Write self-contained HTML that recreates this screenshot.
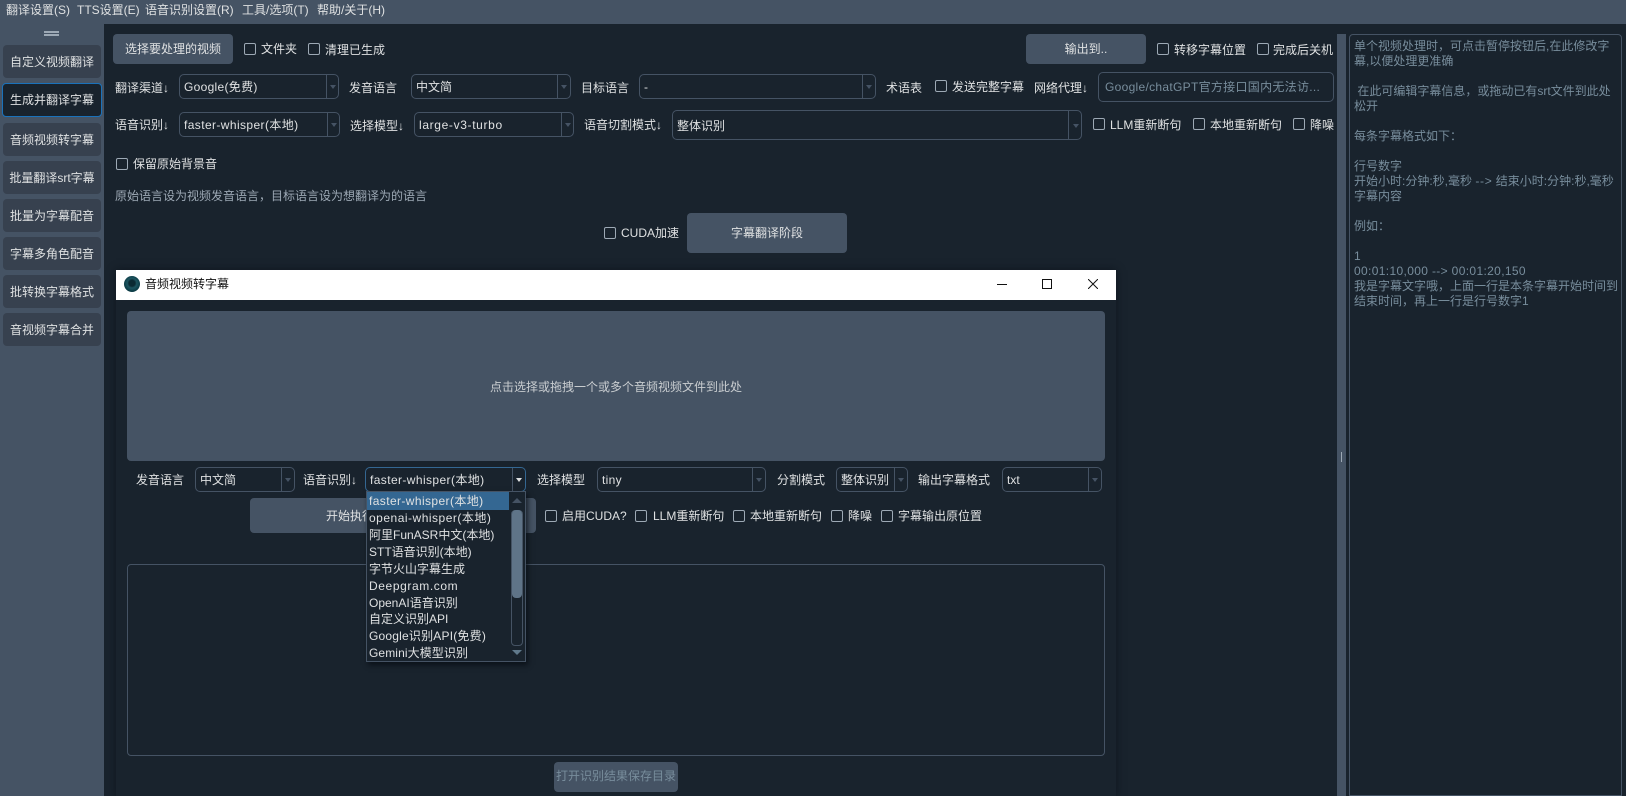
<!DOCTYPE html>
<html lang="zh"><head><meta charset="utf-8"><title>音频视频转字幕</title>
<style>
html,body{margin:0;padding:0;width:1626px;height:796px;overflow:hidden;background:#19232D}
body{position:relative;font:12px/16px "Liberation Sans","Noto Sans CJK SC",sans-serif;color:#DFE1E2}
div,span,i{position:absolute;box-sizing:border-box;white-space:nowrap}
.t{line-height:16px;height:16px;font-weight:400}
.b{background:#455364;border-radius:4px;text-align:center}
.c{width:12px;height:12px;border:1px solid #9DA9B5;border-radius:2px}
.s{border:1px solid #455364;border-radius:5px;height:25px;background:#19232D}
.s b{position:absolute;font-weight:400;left:4px;top:4px;line-height:16px}
.s u{position:absolute;top:0;bottom:0;width:1px;background:#455364}
.s s{position:absolute;top:10px;width:0;height:0;border-left:3px solid transparent;border-right:3px solid transparent;border-top:4px solid #455364}
.n{left:3px;width:98px;height:33px;background:#37414F;border-radius:4px;text-align:center;line-height:34px;color:#DFE1E2}
.m{top:2px}
.i{left:2px;height:17px;line-height:17px;color:#DFE1E2}
em{font-style:normal}
</style></head><body>
<!-- menu -->
<div style="left:0;top:0;width:1626px;height:24px;background:#455364"></div>
<span class="t m" style="left:6px">翻译设置(S)</span>
<span class="t m" style="left:77px">TTS设置(E)</span>
<span class="t m" style="left:145px">语音识别设置(R)</span>
<span class="t m" style="left:242px">工具/选项(T)</span>
<span class="t m" style="left:317px">帮助/关于(H)</span>
<!-- sidebar -->
<div style="left:0;top:24px;width:104px;height:772px;background:#455364"></div>
<div style="left:44px;top:31px;width:15px;height:2px;background:#9DA9B5"></div>
<div style="left:44px;top:34px;width:15px;height:2px;background:#9DA9B5"></div>
<div class="n" style="top:45px">自定义视频翻译</div>
<div class="n" style="top:83px;left:2px;width:100px;height:34px;line-height:33px;background:#19232D;border:1px solid #1A72BB">生成并翻译字幕</div>
<div class="n" style="top:123px">音频视频转字幕</div>
<div class="n" style="top:161px">批量翻译srt字幕</div>
<div class="n" style="top:199px">批量为字幕配音</div>
<div class="n" style="top:237px">字幕多角色配音</div>
<div class="n" style="top:275px">批转换字幕格式</div>
<div class="n" style="top:313px">音视频字幕合并</div>
<!-- top row -->
<div class="b" style="left:113px;top:34px;width:120px;height:30px;line-height:30px">选择要处理的视频</div>
<div class="c" style="left:244px;top:43px"></div><span class="t" style="left:261px;top:41px">文件夹</span>
<div class="c" style="left:308px;top:43px"></div><span class="t" style="left:325px;top:42px">清理已生成</span>
<div class="b" style="left:1026px;top:34px;width:120px;height:30px;line-height:30px">输出到..</div>
<div class="c" style="left:1157px;top:43px"></div><span class="t" style="left:1174px;top:42px">转移字幕位置</span>
<div class="c" style="left:1257px;top:43px"></div><span class="t" style="left:1273px;top:42px">完成后关机</span>
<!-- row 2 -->
<span class="t" style="left:115px;top:80px">翻译渠道↓</span>
<div class="s" style="left:179px;top:74px;width:160px"><b style="letter-spacing:.3px">Google(免费)</b><u style="left:146px"></u><s style="left:150px"></s></div>
<span class="t" style="left:349px;top:80px">发音语言</span>
<div class="s" style="left:411px;top:74px;width:160px"><b>中文简</b><u style="left:145px"></u><s style="left:149px"></s></div>
<span class="t" style="left:581px;top:80px">目标语言</span>
<div class="s" style="left:639px;top:74px;width:237px"><b>-</b><u style="left:222px"></u><s style="left:226px"></s></div>
<span class="t" style="left:886px;top:80px">术语表</span>
<div class="c" style="left:935px;top:80px"></div><span class="t" style="left:952px;top:79px">发送完整字幕</span>
<span class="t" style="left:1034px;top:80px">网络代理↓</span>
<div style="left:1098px;top:72px;width:236px;height:30px;border:1px solid #455364;border-radius:5px;color:#788D9C;padding:6px 0 0 6px;letter-spacing:.3px;overflow:hidden">Google/chatGPT官方接口国内无法访...</div>
<!-- row 3 -->
<span class="t" style="left:115px;top:117px">语音识别↓</span>
<div class="s" style="left:179px;top:112px;width:161px"><b style="letter-spacing:.4px">faster-whisper(本地)</b><u style="left:147px"></u><s style="left:151px"></s></div>
<span class="t" style="left:350px;top:118px">选择模型↓</span>
<div class="s" style="left:414px;top:112px;width:160px"><b style="letter-spacing:.65px">large-v3-turbo</b><u style="left:146px"></u><s style="left:150px"></s></div>
<span class="t" style="left:584px;top:117px">语音切割模式↓</span>
<div class="s" style="left:672px;top:110px;width:410px;height:30px"><b style="top:7px">整体识别</b><u style="left:395px"></u><s style="left:400px;top:13px"></s></div>
<div class="c" style="left:1093px;top:118px"></div><span class="t" style="left:1110px;top:117px">LLM重新断句</span>
<div class="c" style="left:1193px;top:118px"></div><span class="t" style="left:1210px;top:117px">本地重新断句</span>
<div class="c" style="left:1293px;top:118px"></div><span class="t" style="left:1310px;top:117px">降噪</span>
<div class="c" style="left:116px;top:158px"></div><span class="t" style="left:133px;top:156px">保留原始背景音</span>
<span class="t" style="left:115px;top:188px;color:#9DA9B5">原始语言设为视频发音语言，目标语言设为想翻译为的语言</span>
<div class="c" style="left:604px;top:227px"></div><span class="t" style="left:621px;top:225px">CUDA加速</span>
<div class="b" style="left:687px;top:213px;width:160px;height:40px;line-height:40px">字幕翻译阶段</div>
<!-- splitter and right pane -->
<div style="left:1337px;top:34px;width:9px;height:762px;background:#455364"></div>
<div style="left:1341px;top:452px;width:1px;height:10px;background:#9DA9B5"></div>
<div style="left:1349px;top:34px;width:273px;height:762px;border:1px solid #455364;border-radius:4px 4px 0 0"></div>
<div style="left:1354px;top:39px;width:266px;line-height:15px;color:#788D9C;white-space:pre">单个视频处理时，可点击暂停按钮后,在此修改字
幕,以便处理更准确

 在此可编辑字幕信息，或拖动已有srt文件到此处
松开

每条字幕格式如下：

行号数字
开始小时:分钟:秒,毫秒 <em style="letter-spacing:.7px">--&gt;</em> 结束小时:分钟:秒,毫秒
字幕内容

例如：

1
<em style="letter-spacing:.35px">00:01:10,000 --&gt; 00:01:20,150</em>
我是字幕文字哦，上面一行是本条字幕开始时间到
结束时间，再上一行是行号数字1</div>
<!-- dialog -->
<div style="left:116px;top:270px;width:1000px;height:526px;background:#19232D;box-shadow:0 0 8px rgba(10,16,24,.7)"></div>
<div style="left:116px;top:270px;width:1000px;height:30px;background:#fff"></div>
<div style="left:124px;top:276px;width:16px;height:16px;border-radius:50%;background:radial-gradient(circle at 50% 45%,#0b2a33 0 25%,#1d5560 40%,#0a3a44 70%,#06222b 100%)"></div>
<span class="t" style="left:145px;top:276px;color:#111">音频视频转字幕</span>
<div style="left:997px;top:284px;width:10px;height:1px;background:#111"></div>
<div style="left:1042px;top:279px;width:10px;height:10px;border:1px solid #111"></div>
<svg style="position:absolute;left:1088px;top:279px" width="10" height="10" viewBox="0 0 10 10"><path d="M0 0L10 10M10 0L0 10" stroke="#111" stroke-width="1" fill="none"/></svg>
<div style="left:127px;top:311px;width:978px;height:150px;background:#455364;border-radius:4px"></div>
<span class="t" style="left:490px;top:379px;color:#C9CDD0">点击选择或拖拽一个或多个音频视频文件到此处</span>
<span class="t" style="left:136px;top:472px">发音语言</span>
<div class="s" style="left:195px;top:467px;width:100px"><b>中文简</b><u style="left:85px"></u><s style="left:89px"></s></div>
<span class="t" style="left:303px;top:472px">语音识别↓</span>
<span class="t" style="left:537px;top:472px">选择模型</span>
<div class="s" style="left:597px;top:467px;width:169px"><b style="letter-spacing:.3px">tiny</b><u style="left:154px"></u><s style="left:158px"></s></div>
<span class="t" style="left:777px;top:472px">分割模式</span>
<div class="s" style="left:836px;top:467px;width:72px"><b>整体识别</b><u style="left:57px"></u><s style="left:61px"></s></div>
<span class="t" style="left:918px;top:472px">输出字幕格式</span>
<div class="s" style="left:1002px;top:467px;width:100px"><b>txt</b><u style="left:85px"></u><s style="left:89px"></s></div>
<div class="b" style="left:250px;top:498px;width:286px;height:35px"></div>
<span class="t" style="left:326px;top:508px">开始执行</span>
<div class="c" style="left:545px;top:510px"></div><span class="t" style="left:562px;top:508px">启用CUDA?</span>
<div class="c" style="left:635px;top:510px"></div><span class="t" style="left:653px;top:508px">LLM重新断句</span>
<div class="c" style="left:733px;top:510px"></div><span class="t" style="left:750px;top:508px">本地重新断句</span>
<div class="c" style="left:831px;top:510px"></div><span class="t" style="left:848px;top:508px">降噪</span>
<div class="c" style="left:881px;top:510px"></div><span class="t" style="left:898px;top:508px">字幕输出原位置</span>
<div style="left:127px;top:564px;width:978px;height:192px;border:1px solid #455364;border-radius:4px"></div>
<div class="b" style="left:554px;top:762px;width:124px;height:30px;line-height:29px;color:#788D9C">打开识别结果保存目录</div>
<!-- open combobox -->
<div class="s" style="left:365px;top:467px;width:161px;border-color:#346792"><b style="letter-spacing:.4px">faster-whisper(本地)</b><u style="left:146px"></u><s style="left:150px;border-top-color:#DFE1E2"></s></div>
<div style="left:366px;top:491px;width:160px;height:171px;background:#19232D;border:1px solid #455364;box-shadow:2px 3px 5px rgba(5,10,15,.7)">
<div style="left:0;top:0;width:142px;height:18px;background:#346792"></div>
<span class="i" style="top:1px;letter-spacing:.4px">faster-whisper(本地)</span>
<span class="i" style="top:18px;letter-spacing:.5px">openai-whisper(本地)</span>
<span class="i" style="top:35px">阿里FunASR中文(本地)</span>
<span class="i" style="top:52px">STT语音识别(本地)</span>
<span class="i" style="top:69px">字节火山字幕生成</span>
<span class="i" style="top:86px;letter-spacing:.6px">Deepgram.com</span>
<span class="i" style="top:103px">OpenAI语音识别</span>
<span class="i" style="top:119px">自定义识别API</span>
<span class="i" style="top:136px;letter-spacing:.2px">Google识别API(免费)</span>
<span class="i" style="top:153px;letter-spacing:.1px">Gemini大模型识别</span>
<div style="left:144px;top:18px;width:12px;height:136px;border:1px solid #455364;border-radius:4px"></div>
<div style="left:145px;top:18px;width:10px;height:88px;background:#5F7488;border-radius:4px"></div>
<div style="left:145px;top:6px;width:0;height:0;border-left:5px solid transparent;border-right:5px solid transparent;border-bottom:5px solid #455364"></div>
<div style="left:145px;top:158px;width:0;height:0;border-left:5px solid transparent;border-right:5px solid transparent;border-top:5px solid #60798B"></div>
</div>
</body></html>
